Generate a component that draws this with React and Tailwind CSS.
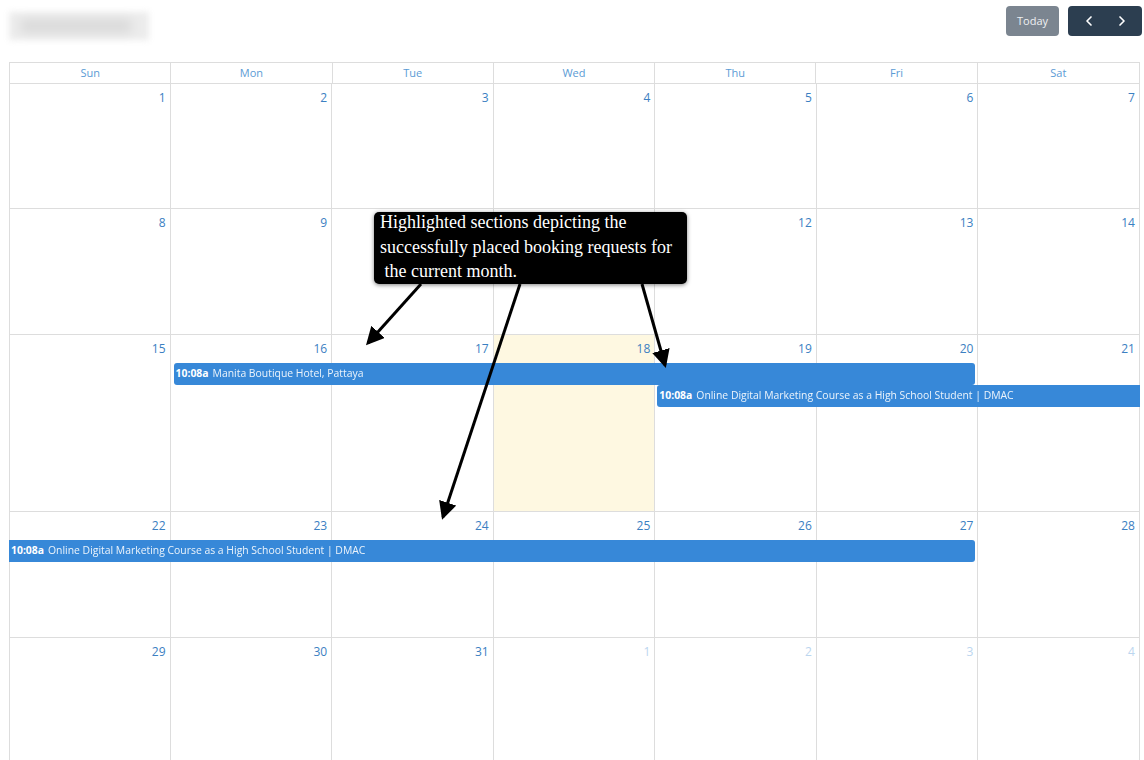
import { ChevronLeft, ChevronRight } from "lucide-react";

const days = ["Sun", "Mon", "Tue", "Wed", "Thu", "Fri", "Sat"];

const weeks = [
  { h: "h-[125px]", nums: [1, 2, 3, 4, 5, 6, 7] },
  { h: "h-[126px]", nums: [8, 9, 10, 11, 12, 13, 14] },
  { h: "h-[177px]", nums: [15, 16, 17, 18, 19, 20, 21], today: 3 },
  { h: "h-[126px]", nums: [22, 23, 24, 25, 26, 27, 28] },
  { h: "h-[125px]", nums: [29, 30, 31, 1, 2, 3, 4], fadeFrom: 3 },
];

const colStart = ["col-start-1", "col-start-2", "col-start-3", "col-start-4", "col-start-5", "col-start-6", "col-start-7"];

function Event({ className, title }) {
  return (
    <div
      className={
        "h-[22px] bg-[#3788d8] text-white text-[10.4px] flex items-center gap-1 px-[2px] overflow-hidden whitespace-nowrap " +
        className
      }
    >
      <span className="font-bold">10:08a</span>
      <span className="opacity-90">{title}</span>
    </div>
  );
}

function Week({ week, children }) {
  return (
    <div className={"grid grid-cols-7 grid-rows-[28px_22px_22px_1fr] border-b border-[#ddd] " + week.h}>
      {week.nums.map((n, i) => (
        <div
          key={i}
          className={
            "row-start-1 row-end-5 border-r border-[#ddd] " +
            colStart[i] +
            (week.today === i ? " bg-[#fef8e1]" : "") +
            (i === 0 ? " border-l" : "")
          }
        />
      ))}
      {week.nums.map((n, i) => (
        <div
          key={"n" + i}
          className={
            "row-start-1 text-right pr-[5px] pt-[6px] text-[12px] leading-4 " +
            colStart[i] +
            (week.fadeFrom !== undefined && i >= week.fadeFrom ? " text-[#bcd6ef]" : " text-[#3b80c2]")
          }
        >
          {n}
        </div>
      ))}
      {children}
    </div>
  );
}

export default function App() {
  return (
    <div className="relative w-[1144px] h-[760px] overflow-hidden bg-white" style={{ fontFamily: "'Open Sans', 'Noto Sans', sans-serif" }}>
      {/* toolbar */}
      <div className="flex items-start justify-between pl-[9px] pr-[2px] pt-[6px] h-[62px]">
        <div className="mt-[6px] w-[140px] h-[28px] bg-[#ececec] blur-[3px] flex items-center px-3">
          <div className="w-[110px] h-[12px] bg-[#d8d8d8] blur-[4px]" />
        </div>
        <div className="flex gap-[9px]">
          <button className="h-[30px] w-[53px] rounded bg-[#7b8590] text-[#eef0f2] text-[11px]">Today</button>
          <div className="h-[30px] w-[74px] rounded bg-[#2c3e50] text-white flex items-center justify-around px-1">
            <ChevronLeft size={16} strokeWidth={2.5} />
            <ChevronRight size={16} strokeWidth={2.5} />
          </div>
        </div>
      </div>

      {/* calendar */}
      <div className="ml-[9px] mr-[4px]">
        <div className="grid grid-cols-7 h-[22px] border border-[#ddd]">
          {days.map((d, i) => (
            <div
              key={d}
              className={"flex items-center justify-center text-[11px] text-[#5b9bd5] " + (i < 6 ? "border-r border-[#ddd]" : "")}
            >
              {d}
            </div>
          ))}
        </div>
        <Week week={weeks[0]} />
        <Week week={weeks[1]} />
        <Week week={weeks[2]}>
          <Event className="row-start-2 col-start-2 col-end-7 ml-[3px] mr-[3px] rounded-[3px]" title="Manita Boutique Hotel, Pattaya" />
          <Event
            className="row-start-3 col-start-5 col-end-8 ml-[2px] rounded-l-[3px]"
            title="Online Digital Marketing Course as a High School Student | DMAC"
          />
        </Week>
        <Week week={weeks[3]}>
          <Event
            className="row-start-2 col-start-1 col-end-7 mr-[3px] rounded-r-[3px]"
            title="Online Digital Marketing Course as a High School Student | DMAC"
          />
        </Week>
        <Week week={weeks[4]} />
      </div>

      {/* annotation */}
      <div
        className="absolute left-[374px] top-[212px] w-[313px] h-[72px] bg-black rounded-[5px] shadow-[0_1px_4px_rgba(0,0,0,0.5)] text-white text-[18px] leading-[24.5px] pl-[6px]"
        style={{ fontFamily: "'Liberation Serif', serif" }}
      >
        <div className="-mt-[2px]">Highlighted sections depicting the</div>
        <div>successfully placed booking requests for</div>
        <div className="whitespace-pre"> the current month.</div>
      </div>
      <svg className="absolute inset-0 pointer-events-none" width="1144" height="760">
        <defs>
          <marker id="ah" markerWidth="6" markerHeight="6" refX="5" refY="3" orient="auto" markerUnits="strokeWidth">
            <path d="M0,0 L6,3 L0,6 Z" fill="#000" />
          </marker>
        </defs>
        <g stroke="#000" strokeWidth="3" fill="none">
          <line x1="421" y1="284" x2="368" y2="343" markerEnd="url(#ah)" />
          <line x1="520" y1="284" x2="443" y2="517" markerEnd="url(#ah)" />
          <line x1="642" y1="284" x2="665" y2="365" markerEnd="url(#ah)" />
        </g>
      </svg>
    </div>
  );
}
